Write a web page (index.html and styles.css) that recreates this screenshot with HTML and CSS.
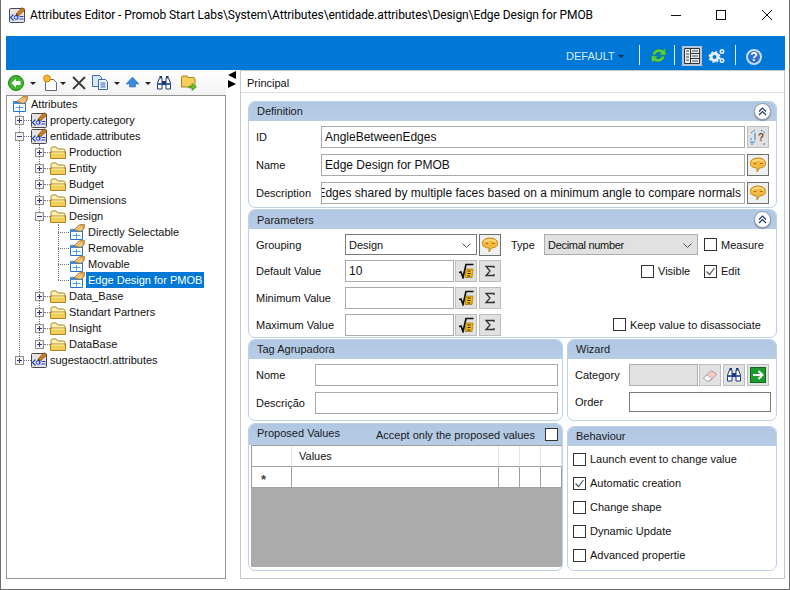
FILE: index.html
```html
<!DOCTYPE html>
<html lang="en">
<head>
<meta charset="utf-8">
<title>Attributes Editor</title>
<link rel="stylesheet" href="styles.css">
</head>
<body>
<svg class="sprite" width="0" height="0">
  <defs>
    <symbol id="editor" viewBox="0 0 16 16">
      <rect x="0.5" y="1.5" width="15" height="14" rx="1" fill="#e4e4e4" stroke="#4a4a4a"/>
      <path d="M4.500 7.500 1.500 10.500 4.500 13.500" fill="none" stroke="#1a3fe0" stroke-width="1.100"/>
      <circle cx="7" cy="10.500" r="1.800" fill="none" stroke="#1a3fe0"/>
      <path d="M8.800 8.700v3.800M10.500 9.500h4M10.500 12h4" stroke="#1a3fe0"/>
      <path d="M7 7 13 .5 15.800 3 10 8.500z" fill="#d07a1e" stroke="#6e3c10" stroke-width="0.600"/>
      <path d="M7 7 6.500 9 10 8.500z" fill="#3a2a10"/>
    </symbol>
    <symbol id="attr" viewBox="0 0 16 16">
      <path d="M1.500 5.500h12v10h-12z" fill="#fff" stroke="#1e78d2"/>
      <path d="M1 5h13v3H1z" fill="#3a8fe2"/>
      <path d="M7.500 9v5.500M3.500 11.500h8" stroke="#5a9fe0"/>
      <path d="M4.500 6 9.500 1.500 11 .5h4.800L15 5l-4 2.500z" fill="#e2a850" stroke="#8f5d1c" stroke-width="0.600"/>
      <path d="M7 5 11 2M9 6l4-3M11 6.500l3-2" stroke="#fff3d0" stroke-width="0.800"/>
    </symbol>
    <symbol id="folder" viewBox="0 0 16 16">
      <path d="M1 4.500Q1 3 2.500 3H6l1.500 2h6Q15 5 15 6.500V14H1z" fill="#fdf2b8" stroke="#a8842a"/>
      <path d="M.5 8h15v6.500H.5z" fill="#f5cd52" stroke="#a8842a"/>
      <path d="M2 9h12" stroke="#fff2b0"/>
    </symbol>
    <symbol id="plus" viewBox="0 0 9 9">
      <rect x="0.500" y="0.500" width="8" height="8" fill="#f2f2f2" stroke="#8e8f8f"/>
      <path d="M2 4.500h5M4.500 2v5" stroke="#2c3e70"/>
    </symbol>
    <symbol id="minus" viewBox="0 0 9 9">
      <rect x="0.500" y="0.500" width="8" height="8" fill="#f2f2f2" stroke="#8e8f8f"/>
      <path d="M2 4.500h5" stroke="#2c3e70"/>
    </symbol>
    <symbol id="bubble" viewBox="0 0 16 16">
      <path d="M8 1C12.300 1 15.800 3.200 15.800 6.300S12.500 11 9.500 11L7 15V11C3.500 11 .2 9.500 .2 6.300S3.700 1 8 1z" fill="#f4b93a" stroke="#b78a2a"/>
      <path d="M2.500 4.500C5 2.500 11 2.300 13.500 4.500" fill="none" stroke="#fde9a0" stroke-width="1.200"/>
      <path d="M4 6.500h2M10 6.500h2.500" stroke="#b05a10"/>
    </symbol>
    <symbol id="sqrt" viewBox="0 0 16 16">
      <path d="M1 9.500 3 9l2 5.500L8 1.500h7.500" fill="none" stroke="#111" stroke-width="1.700"/>
      <path d="M8 6h7l-1 8.500H7z" fill="#f5b800" stroke="#8a6400" stroke-width="0.600"/>
      <path d="M9.500 8h3M9.500 10.500h3M9.300 13h3" stroke="#222"/>
    </symbol>
    <symbol id="sigma" viewBox="0 0 12 12">
      <path d="M10 3V1.500H2L6 6 2 10.500h8V9" fill="none" stroke="#333" stroke-width="1.300"/>
    </symbol>
    <symbol id="binoc" viewBox="0 0 16 16">
      <path d="M1.500 14V8L3.500 3h2.500v11zM14.500 14V8L12.500 3H10v11z" fill="#fff" stroke="#1e3a78"/>
      <path d="M6 6h4v4H6z" fill="#1e3a78"/>
      <path d="M1.500 9h4.500M10 9h4.500" stroke="#3a63b8" stroke-width="2"/>
      <path d="M3.500 1h2.500v2H3.500zM10 1h2.500v2H10z" fill="#1e3a78"/>
    </symbol>
  </defs>
</svg>

<div class="window">
  <header class="titlebar">
    <svg class="ti"><use href="#editor"/></svg>
    <span class="title">Attributes Editor - Promob Start Labs\System\Attributes\entidade.attributes\Design\Edge Design for PMOB</span>
    <div class="wctl">
      <svg width="10" height="10" viewBox="0 0 10 10"><path d="M0 5.500h10" stroke="#111"/></svg>
      <svg width="10" height="10" viewBox="0 0 10 10"><rect x="0.500" y="0.500" width="9" height="9" fill="none" stroke="#111"/></svg>
      <svg class="wclose" width="10" height="10" viewBox="0 0 10 10"><path d="M0 0 10 10M10 0 0 10" stroke="#111"/></svg>
    </div>
  </header>

  <div class="client">
    <div class="ribbon">
      <span class="mode">DEFAULT</span>
      <span class="mode-caret"></span>
      <span class="vsep s1"></span>
      <svg class="r-refresh" width="17" height="17" viewBox="0 0 17 17">
        <path d="M2.500 7.500C3 3 9 .5 13 3.500L15 1.500 15.800 8H9.500L11.500 6C9 4.300 6 5 5.200 8z" fill="#5fd03f" stroke="#2a8f22" stroke-width="0.500"/>
        <path d="M14.500 9.500C14 14 8 16.500 4 13.500L2 15.500 1.200 9H7.500L5.500 11C8 12.700 11 12 11.800 9z" fill="#5fd03f" stroke="#2a8f22" stroke-width="0.500"/>
      </svg>
      <span class="vsep s2"></span>
      <span class="r-panel">
        <svg width="16" height="16" viewBox="0 0 16 16">
          <path d="M.5 .5h15v15H.5zM6.500 .5v15M6.500 5.500h9M6.500 10.500h9" fill="#e8eef5" stroke="#333"/>
          <path d="M2 3h3M2 6h3M2 9h3M2 12h3M8 3h6M8 8h6M8 13h6" stroke="#444"/>
        </svg>
      </span>
      <svg class="r-gears" width="18" height="18" viewBox="0 0 18 18">
        <circle cx="6.500" cy="10" r="3.500" fill="none" stroke="#e8eef5" stroke-width="3"/>
        <circle cx="6.500" cy="10" r="5.300" fill="none" stroke="#e8eef5" stroke-width="1.400" stroke-dasharray="2 2.200"/>
        <circle cx="14" cy="4.500" r="1.700" fill="none" stroke="#e8eef5" stroke-width="1.600"/>
        <circle cx="14" cy="13.500" r="1.700" fill="none" stroke="#e8eef5" stroke-width="1.600"/>
      </svg>
      <span class="vsep s3"></span>
      <span class="r-help">?</span>
    </div>

    <div class="panes">
      <aside class="left">
        <div class="tools">
          <svg class="t-back" width="16" height="16" viewBox="0 0 16 16">
            <circle cx="8" cy="8" r="7.500" fill="#3fb52f" stroke="#1d7d18"/>
            <path d="M8 3.500 3.500 8 8 12.500V10h4.500V6H8z" fill="#fff"/>
          </svg>
          <span class="caret c1"></span>
          <svg class="t-new" width="16" height="17" viewBox="0 0 16 17">
            <path d="M3.500 5.500h8l3 3v8h-11z" fill="#fff" stroke="#5a6a80"/>
            <circle cx="5" cy="4.500" r="3.500" fill="#f7b52a" stroke="#e0891a"/>
          </svg>
          <span class="caret c2"></span>
          <svg class="t-del" width="14" height="14" viewBox="0 0 14 14"><path d="M1 1 13 13M13 1 1 13" stroke="#3a3a3a" stroke-width="1.800"/></svg>
          <svg class="t-copy" width="16" height="15" viewBox="0 0 16 15">
            <path d="M.5 .5h7l2 2v9h-9z" fill="#dce8f8" stroke="#3f67ad"/>
            <path d="M6.500 4.500h7l2 2v8h-9z" fill="#eef4fc" stroke="#3f67ad"/>
            <path d="M8.500 8h5M8.500 10h5M8.500 12h5" stroke="#3f67ad"/>
          </svg>
          <span class="caret c3"></span>
          <svg class="t-up" width="13" height="11" viewBox="0 0 13 11"><path d="M6.500 0 13 7H9.500v3h-6V7H0z" fill="#3b8ae0" stroke="#2a62b5" stroke-width="0.500"/></svg>
          <span class="caret c4"></span>
          <svg class="t-bin" width="16" height="16"><use href="#binoc"/></svg>
          <svg class="t-fold" width="16" height="16" viewBox="0 0 16 16">
            <path d="M.5 3Q.5 1 2 1h4l1 1.500h5.500Q14 2.500 14 4v8H.5z" fill="#f5cf5a" stroke="#a5801f"/>
            <path d="M8 11h3V8.500L15.500 12 11 15.500V13H8z" fill="#6cbf2a" stroke="#3a7d14" stroke-width="0.600"/>
          </svg>
        </div>
        <div class="tree">
          <div class="row root"><svg class="ico"><use href="#attr"/></svg><span class="lbl">Attributes</span></div>
          <div class="branch b1">
            <div class="row"><svg class="exp"><use href="#plus"/></svg><i class="dash d1"></i><svg class="ico"><use href="#editor"/></svg><span class="lbl">property.category</span></div>
            <div class="row"><svg class="exp"><use href="#minus"/></svg><i class="dash d1"></i><svg class="ico"><use href="#editor"/></svg><span class="lbl">entidade.attributes</span></div>
            <div class="branch b2">
              <div class="row"><svg class="exp"><use href="#plus"/></svg><i class="dash d2"></i><svg class="ico"><use href="#folder"/></svg><span class="lbl">Production</span></div>
              <div class="row"><svg class="exp"><use href="#plus"/></svg><i class="dash d2"></i><svg class="ico"><use href="#folder"/></svg><span class="lbl">Entity</span></div>
              <div class="row"><svg class="exp"><use href="#plus"/></svg><i class="dash d2"></i><svg class="ico"><use href="#folder"/></svg><span class="lbl">Budget</span></div>
              <div class="row"><svg class="exp"><use href="#plus"/></svg><i class="dash d2"></i><svg class="ico"><use href="#folder"/></svg><span class="lbl">Dimensions</span></div>
              <div class="row"><svg class="exp"><use href="#minus"/></svg><i class="dash d2"></i><svg class="ico"><use href="#folder"/></svg><span class="lbl">Design</span></div>
              <div class="branch b3">
                <div class="row"><i class="dash d3"></i><svg class="ico"><use href="#attr"/></svg><span class="lbl leaf">Directly Selectable</span></div>
                <div class="row"><i class="dash d3"></i><svg class="ico"><use href="#attr"/></svg><span class="lbl leaf">Removable</span></div>
                <div class="row"><i class="dash d3"></i><svg class="ico"><use href="#attr"/></svg><span class="lbl leaf">Movable</span></div>
                <div class="row"><i class="dash d3"></i><svg class="ico"><use href="#attr"/></svg><span class="lbl leaf selected">Edge Design for PMOB</span></div>
              </div>
              <div class="row"><svg class="exp"><use href="#plus"/></svg><i class="dash d2"></i><svg class="ico"><use href="#folder"/></svg><span class="lbl">Data_Base</span></div>
              <div class="row"><svg class="exp"><use href="#plus"/></svg><i class="dash d2"></i><svg class="ico"><use href="#folder"/></svg><span class="lbl">Standart Partners</span></div>
              <div class="row"><svg class="exp"><use href="#plus"/></svg><i class="dash d2"></i><svg class="ico"><use href="#folder"/></svg><span class="lbl">Insight</span></div>
              <div class="row"><svg class="exp"><use href="#plus"/></svg><i class="dash d2"></i><svg class="ico"><use href="#folder"/></svg><span class="lbl">DataBase</span></div>
            </div>
            <div class="row"><svg class="exp"><use href="#plus"/></svg><i class="dash d1"></i><svg class="ico"><use href="#editor"/></svg><span class="lbl">sugestaoctrl.attributes</span></div>
          </div>
        </div>
      </aside>

      <div class="splitter">
        <span class="arrow-l"></span>
        <span class="arrow-r"></span>
      </div>

      <main class="pane">
        <div class="tab">Principal</div>
        <div class="groups">
          <section class="group def">
            <h2 class="ghead">Definition<span class="collapse"><svg width="9" height="9" viewBox="0 0 9 9"><path d="M1 4.500 4.500 1 8 4.500M1 8 4.500 4.500 8 8" fill="none" stroke="#23386b" stroke-width="1.200"/></svg></span></h2>
            <div class="def-body">
              <div class="frow"><label class="flabel">ID</label><div class="field grow">AngleBetweenEdges</div><button class="btn"><svg width="18" height="18" viewBox="0 0 18 18"><path d="M6 2 2 5M12 2l4 3M2 10v6h3M16 16h-3" fill="none" stroke="#2b7fd8" stroke-dasharray="2 1"/><path d="M6 5v7M3 14h3" fill="none" stroke="#2b7fd8"/><text class="qmark" x="9" y="13">?</text></svg></button></div>
              <div class="frow"><label class="flabel">Name</label><div class="field grow">Edge Design for PMOB</div><button class="btn focus"><svg width="16" height="16"><use href="#bubble"/></svg></button></div>
              <div class="frow"><label class="flabel">Description</label><div class="field grow scrolled"><span>Edges shared by multiple faces based on a minimum angle to compare normals</span></div><button class="btn focus"><svg width="16" height="16"><use href="#bubble"/></svg></button></div>
            </div>
          </section>

          <section class="group params">
            <h2 class="ghead">Parameters<span class="collapse"><svg width="9" height="9" viewBox="0 0 9 9"><path d="M1 4.500 4.500 1 8 4.500M1 8 4.500 4.500 8 8" fill="none" stroke="#23386b" stroke-width="1.200"/></svg></span></h2>
            <div class="params-body">
              <div class="pl"><label class="plabel">Grouping</label><div class="field dark w132">Design<svg class="chev" width="9" height="5" viewBox="0 0 9 5"><path d="M.5 .5 4.500 4.500 8.500 .5" fill="none" stroke="#555"/></svg></div><button class="btn focus ml2"><svg width="16" height="16"><use href="#bubble"/></svg></button></div>
              <div class="pr"><label class="type-l">Type</label><div class="field dis w154"><span class="tight">Decimal number</span><svg class="chev" width="9" height="5" viewBox="0 0 9 5"><path d="M.5 .5 4.500 4.500 8.500 .5" fill="none" stroke="#555"/></svg></div><label class="check ml6"><i class="box"></i>Measure</label></div>

              <div class="pl"><label class="plabel">Default Value</label><div class="field w109 big">10</div><button class="btn ml1"><svg width="16" height="16"><use href="#sqrt"/></svg></button><button class="btn ml2"><svg width="12" height="12"><use href="#sigma"/></svg></button></div>
              <div class="pr pad130"><label class="check w63"><i class="box"></i>Visible</label><label class="check"><i class="box on"><svg width="11" height="11" viewBox="0 0 11 11"><path d="M1.500 5.500 4.500 8.500 9.500 2" fill="none" stroke="#555" stroke-width="1.200"/></svg></i>Edit</label></div>

              <div class="pl"><label class="plabel">Minimum Value</label><div class="field w109"></div><button class="btn ml1"><svg width="16" height="16"><use href="#sqrt"/></svg></button><button class="btn ml2"><svg width="12" height="12"><use href="#sigma"/></svg></button></div>
              <div class="pr"></div>

              <div class="pl"><label class="plabel">Maximum Value</label><div class="field w109"></div><button class="btn ml1"><svg width="16" height="16"><use href="#sqrt"/></svg></button><button class="btn ml2"><svg width="12" height="12"><use href="#sigma"/></svg></button></div>
              <div class="pr pad102"><label class="check"><i class="box"></i>Keep value to disassociate</label></div>
            </div>
          </section>

          <div class="lower">
            <div class="lcol">
              <section class="group tag">
                <h2 class="ghead">Tag Agrupadora</h2>
                <div class="two-body">
                  <div class="trow"><label class="tl">Nome</label><div class="field grow"></div></div>
                  <div class="trow"><label class="tl">Descrição</label><div class="field grow"></div></div>
                </div>
              </section>
              <section class="group prop">
                <h2 class="ghead between">Proposed Values<label class="accept">Accept only the proposed values<i class="box"></i></label></h2>
                <div class="grid">
                  <div class="gh"></div><div class="gh values">Values</div><div class="gh"></div><div class="gh"></div><div class="gh"></div>
                  <div class="gc star">*</div><div class="gc"></div><div class="gc"></div><div class="gc"></div><div class="gc"></div>
                  <div class="gempty"></div>
                </div>
              </section>
            </div>
            <div class="rcol">
              <section class="group wiz">
                <h2 class="ghead">Wizard</h2>
                <div class="two-body">
                  <div class="wrow"><label class="wl cat">Category</label><div class="field dis w69"></div>
                    <button class="btn ml1"><svg width="16" height="16" viewBox="0 0 16 16"><path d="M1.500 11 9 3.500 14.500 7 8 14H4.500z" fill="#f6c9c4" stroke="#b09a98"/><path d="M1.500 11 5 8 9.500 11.500 7 14H4.500z" fill="#fff" stroke="#b0b0b0"/></svg></button>
                    <button class="btn ml2"><svg width="16" height="16"><use href="#binoc"/></svg></button>
                    <button class="btn ml2"><svg width="16" height="16" viewBox="0 0 16 16"><rect x=".5" y=".5" width="15" height="15" fill="#1f9a2e" stroke="#0f6a1c"/><path d="M3 8h9M8.500 4 12.500 8 8.500 12" fill="none" stroke="#fff" stroke-width="2"/></svg></button>
                  </div>
                  <div class="wrow"><label class="wl">Order</label><div class="field dark order"></div></div>
                </div>
              </section>
              <section class="group beh">
                <h2 class="ghead">Behaviour</h2>
                <div class="beh-body">
                  <label class="check"><i class="box"></i>Launch event to change value</label>
                  <label class="check"><i class="box on"><svg width="11" height="11" viewBox="0 0 11 11"><path d="M1.500 5.500 4.500 8.500 9.500 2" fill="none" stroke="#555" stroke-width="1.200"/></svg></i>Automatic creation</label>
                  <label class="check"><i class="box"></i>Change shape</label>
                  <label class="check"><i class="box"></i>Dynamic Update</label>
                  <label class="check"><i class="box"></i>Advanced propertie</label>
                </div>
              </section>
            </div>
          </div>
        </div>
      </main>
    </div>
  </div>
</div>
</body>
</html>
```

FILE: styles.css
```css
* { box-sizing: border-box; }
html, body { margin: 0; padding: 0; }
body {
  width: 790px;
  height: 590px;
  overflow: hidden;
  background: #fff;
  font: 11px/14px "Liberation Sans", Arial, sans-serif;
  color: #111;
}
.sprite { position: absolute; width: 0; height: 0; }
svg { display: block; flex: none; }
button { font: inherit; padding: 0; margin: 0; }
label { display: block; }
i { font-style: normal; }

.window {
  width: 790px;
  height: 590px;
  display: flex;
  flex-direction: column;
  border-left: 1px solid #6f6f6f;
  border-right: 1px solid #6f6f6f;
  border-bottom: 1px solid #6f6f6f;
  background: #fff;
}

.titlebar {
  height: 36px;
  flex: none;
  display: flex;
  align-items: flex-start;
  padding: 7px 0 0 8px;
}
.ti { width: 16px; height: 16px; }
.title {
  margin-left: 5px;
  font: 12px/16px Roboto, sans-serif;
  letter-spacing: -0.080px;
  white-space: nowrap;
  color: #000;
}
.wctl {
  display: flex;
  gap: 35px;
  margin: 3px 0 0 auto;
  padding-right: 17px;
}
.wclose { margin-left: 1px; }

.client {
  flex: 1;
  min-height: 0;
  display: flex;
  flex-direction: column;
  padding: 0 4px 10px 5px;
}

.ribbon {
  height: 34px;
  flex: none;
  background: #0078d7;
  display: flex;
  align-items: center;
  color: #fff;
  padding-left: 560px;
}
.mode { font-size: 11px; color: #dbe9f7; width: 47px; margin-top: 6px; white-space: nowrap; }
.mode-caret {
  margin: 7px 0 0 5px;
  border: 3px solid transparent;
  border-top: 3px solid #1c2a3a;
  border-bottom: 0;
  width: 0;
}
.vsep { width: 1px; height: 20px; background: #e8f2fb; margin-top: 4px; }
.s1 { margin-left: 15px; }
.r-refresh { margin: 5px 0 0 10px; }
.s2 { margin-left: 7px; }
.r-panel {
  margin: 6px 0 0 7px;
  width: 20px;
  height: 20px;
  background: #b8c6d6;
  display: flex;
  align-items: center;
  justify-content: center;
}
.r-gears { margin: 5px 0 0 6px; }
.s3 { margin-left: 9px; }
.r-help {
  margin: 8px 0 0 10px;
  width: 16px;
  height: 16px;
  border-radius: 50%;
  border: 2px solid #c8dcf2;
  background: #2b6fcf;
  color: #fff;
  font: bold 12px/12px "Liberation Sans", sans-serif;
  text-align: center;
}

.panes { flex: 1; min-height: 0; display: flex; }

.left { width: 220px; flex: none; display: flex; flex-direction: column; }
.tools {
  height: 25px;
  flex: none;
  display: flex;
  align-items: center;
  background: linear-gradient(#ffffff, #f2f2f2);
  padding-left: 2px;
}
.caret {
  width: 0;
  border: 3px solid transparent;
  border-top: 3px solid #222;
  border-bottom: 0;
  margin-top: 2px;
}
.c1 { margin-left: 6px; }
.t-new { margin-left: 6px; }
.c2 { margin-left: 2px; }
.t-del { margin-left: 6px; }
.t-copy { margin-left: 6px; }
.c3 { margin-left: 6px; }
.t-up { margin-left: 6px; }
.c4 { margin-left: 6px; }
.t-bin { margin-left: 5px; }
.t-fold { margin-left: 9px; }

.tree {
  flex: 1;
  min-height: 0;
  border: 1px solid #949494;
  background: #fff;
  padding: 0 0 0 5px;
  overflow: hidden;
}
.row { height: 16px; display: flex; align-items: center; white-space: nowrap; }
.ico { width: 16px; height: 16px; }
.lbl { margin-left: 3px; line-height: 16px; }
.lbl.leaf { margin-left: 1px; padding: 0 2px; }
.selected { background: #0078d7; color: #fff; padding-right: 3px; }

.branch { position: relative; }
.branch::before {
  content: "";
  position: absolute;
  left: 0;
  top: 0;
  bottom: 8px;
  border-left: 1px dotted #777;
}
.b1 { margin-left: 7px; }
.b2 { margin-left: 20px; }
.b3 { margin-left: 19px; }
.exp { width: 9px; height: 9px; margin-left: -4px; position: relative; z-index: 1; }
.dash { height: 0; border-top: 1px dotted #777; }
.d1 { width: 7px; }
.d2 { width: 6px; }
.d3 { width: 11px; }

.splitter {
  width: 14px;
  flex: none;
  padding: 1px 0 0 2px;
  display: flex;
  flex-direction: column;
  gap: 1px;
}
.arrow-l, .arrow-r { width: 0; height: 0; border-top: 4px solid transparent; border-bottom: 4px solid transparent; }
.arrow-l { border-right: 8px solid #000; }
.arrow-r { border-left: 8px solid #000; }

.pane {
  flex: 1;
  min-width: 0;
  border: 1px solid #c8c8c8;
  display: flex;
  flex-direction: column;
}
.tab {
  height: 22px;
  flex: none;
  border-bottom: 1px solid #e0e0e0;
  padding: 5px 0 0 6px;
}
.groups {
  flex: 1;
  padding: 8px 7px 0;
  display: flex;
  flex-direction: column;
  gap: 1px;
}

.group {
  border: 1px solid #bcd0ea;
  border-radius: 7px;
  overflow: hidden;
  background: #fff;
}
.ghead {
  margin: 0;
  height: 19px;
  font: inherit;
  line-height: 18px;
  padding: 0 0 2px 8px;
  background: linear-gradient(#b0c7e3, #b7cde6);
  display: flex;
  align-items: center;
  justify-content: space-between;
  color: #1a1a1a;
}
.params .ghead { padding-bottom: 0; }
.between { align-items: flex-start; padding: 0 4px 0 8px; }
.collapse {
  width: 17px;
  height: 17px;
  margin: 1px 5px 0 0;
  align-self: flex-start;
  border-radius: 50%;
  background: #fff;
  border: 1px solid #8e98aa;
  box-shadow: 0 1px 1px #7f8ba0;
  display: flex;
  align-items: center;
  justify-content: center;
}

.def { height: 107px; flex: none; }
.def-body { padding: 5px 7px 0; display: flex; flex-direction: column; gap: 6px; }
.def-body .field, .big { font-size: 12px; }
.frow { display: flex; height: 22px; align-items: stretch; }
.flabel { width: 65px; flex: none; align-self: center; }
.grow { flex: 1; min-width: 0; }
.frow .btn { margin-left: 2px; }

.field {
  height: 22px;
  border: 1px solid #a9a9a9;
  background: #fff;
  padding: 0 3px;
  display: flex;
  align-items: center;
  white-space: nowrap;
  overflow: hidden;
  position: relative;
}
.scrolled { justify-content: flex-end; }
.scrolled span { flex: none; }
.dark { border-color: #7a7a7a; }
.dis { background: #e1e1e1; border-color: #adadad; }
.w132 { width: 132px; height: 21px; }
.w109 { width: 109px; }
.w154 { width: 154px; height: 21px; }
.tight { letter-spacing: -0.300px; }
.w69 { width: 69px; }
.order { width: 142px; height: 20px; }
.chev { position: absolute; right: 5px; top: 8px; }

.btn {
  width: 22px;
  height: 22px;
  flex: none;
  border: 1px solid #bdbdbd;
  background: #e1e1e1;
  display: flex;
  align-items: center;
  justify-content: center;
}
.btn.focus { border-color: #6f6f6f; background: #f0f0f0; }
.ml1 { margin-left: 1px; }
.ml2 { margin-left: 2px; }
.ml6 { margin-left: 6px; }
.qmark { font: bold 10px "Liberation Sans", sans-serif; fill: #7a4a1a; }

.params { height: 129px; flex: none; }
.params-body {
  display: grid;
  grid-template-columns: 245px 1fr;
  grid-template-rows: 26px 27px 27px 22px;
  padding: 5px 0 0 7px;
}
.pl, .pr { display: flex; align-items: flex-start; }
.pl { height: 22px; }
.plabel { width: 89px; flex: none; align-self: center; }
.pr { padding-left: 10px; align-items: center; height: 21px; }
.type-l { width: 33px; }
.check { display: flex; align-items: center; white-space: nowrap; }
.box {
  width: 13px;
  height: 13px;
  flex: none;
  border: 1px solid #333;
  background: #fff;
  margin-right: 4px;
  display: flex;
  align-items: center;
  justify-content: center;
}
.w63 { width: 63px; }
.pad130 { padding-left: 140px; height: 22px; }
.pad102 { padding-left: 112px; }

.lower { display: flex; gap: 4px; flex: none; }
.lcol { width: 315px; display: flex; flex-direction: column; gap: 2px; }
.rcol { width: 210px; display: flex; flex-direction: column; gap: 5px; }
.tag { height: 82px; flex: none; }
.wiz { height: 82px; flex: none; }
.two-body { padding: 5px 0 0 7px; display: flex; flex-direction: column; gap: 6px; }
.trow { display: flex; height: 22px; padding-right: 4px; align-items: stretch; }
.tl { width: 59px; flex: none; align-self: center; }
.wrow { display: flex; height: 22px; align-items: flex-start; }
.wl { width: 54px; flex: none; line-height: 21px; }
.wl.cat { line-height: 22px; }

.prop { height: 148px; flex: none; }
.prop .ghead { height: 21px; }
.accept { display: flex; align-items: center; height: 21px; }
.accept .box { margin: 0 0 0 10px; }
.grid {
  margin: 0 0 0 2px;
  height: 122px;
  display: grid;
  grid-template-columns: 40px 207px 21px 21px 21px;
  grid-template-rows: 21px 21px 1fr;
  border-top: 1px solid #a0a0a0;
  border-left: 1px solid #a0a0a0;
  background: #fff;
}
.gh { border-right: 1px solid #e4e4e4; border-bottom: 1px solid #a0a0a0; line-height: 20px; }
.gh.values { padding-left: 7px; }
.gc { border-right: 1px solid #a0a0a0; border-bottom: 1px solid #a0a0a0; }
.gc.star { font-weight: bold; font-size: 13px; line-height: 25px; padding-left: 9px; color: #444; overflow: hidden; }
.gempty { grid-column: 1 / -1; background: #ababab; margin-left: -1px; }

.beh { height: 145px; flex: none; }
.beh-body { padding: 1px 0 0 5px; }
.beh-body .check { height: 24px; }
```
